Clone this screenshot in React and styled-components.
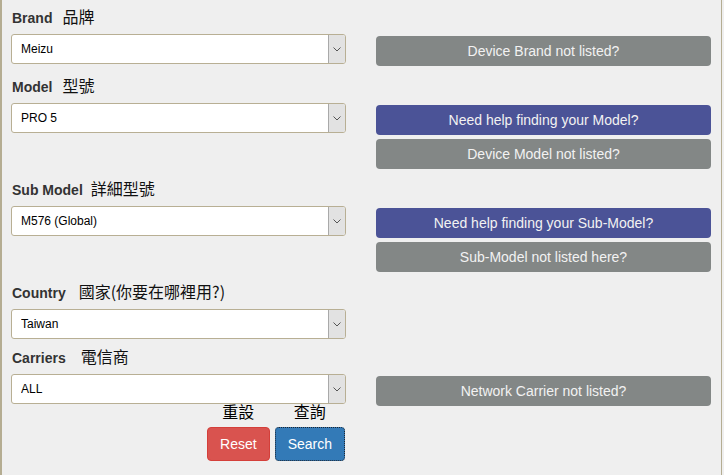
import React from 'react';
import styled, { createGlobalStyle } from 'styled-components';

const GlobalStyle = createGlobalStyle`
	html, body {
		margin: 0;
		padding: 0;
		background: #efefef;
	}
	body {
		font-family: "Liberation Sans", Arial, sans-serif;
	}
`

const Page = styled.div`
	box-sizing: border-box;
	width: 722px;
	height: 475px;
	padding: 8px 0 0 9px;
	background: #efefef;
	border-left: 2px solid #b5ad92;
	border-right: 1px solid #b5ad92;
	overflow: hidden;
`

const Row = styled.div`
	display: grid;
	grid-template-columns: 335px 335px;
	column-gap: 30px;
	align-items: start;
	margin-bottom: 9px;
`

const Field = styled.div`
	display: flex;
	flex-direction: column;
`

const Label = styled.div`
	display: flex;
	align-items: baseline;
	height: 20px;
	line-height: 20px;
	margin: 0 0 6px 1px;
	font-size: 14px;
	font-weight: bold;
	color: #333;
	white-space: nowrap;
`

const Zh = styled.span`
	margin-left: ${props => props.gap}px;
	font-family: "Noto Sans CJK TC", "Noto Sans", sans-serif;
	font-size: 16px;
	font-weight: normal;
	line-height: 1;
	color: #111;
`

const SelectBox = styled.div`
	display: flex;
	box-sizing: border-box;
	height: 30px;
	background: #fff;
	border: 1px solid #b8af94;
	border-radius: 3px;
	overflow: hidden;
`

const NativeSelect = styled.select`
	flex: 1;
	min-width: 0;
	appearance: none;
	-webkit-appearance: none;
	border: none;
	outline: none;
	background: transparent;
	padding: 0 0 0 9px;
	font-family: "Liberation Sans", Arial, sans-serif;
	font-size: 12px;
	color: #000;
`

const ArrowBox = styled.span`
	display: flex;
	align-items: center;
	justify-content: center;
	width: 16px;
	background: #e2e2e2;
	border-left: 1px solid #a9a9a9;
`

const ButtonStack = styled.div`
	display: flex;
	flex-direction: column;
	gap: 4px;
	padding-top: 28px;
	margin-bottom: 2px;
`

const HelpButton = styled.button`
	box-sizing: border-box;
	height: 30px;
	width: 100%;
	border: none;
	border-radius: 4px;
	background: ${props => props.variant === 'help' ? '#4b5397' : '#838786'};
	color: #f2f2f2;
	font-family: "Liberation Sans", Arial, sans-serif;
	font-size: 14px;
	cursor: pointer;
`

const Actions = styled.div`
	display: flex;
	justify-content: flex-end;
	gap: 5px;
	margin-top: -3px;
	padding-right: 1px;
`

const Action = styled.div`
	display: flex;
	flex-direction: column;
	align-items: center;
`

const Caption = styled.span`
	height: 20px;
	line-height: 20px;
	margin-bottom: 6px;
	font-family: "Noto Sans CJK TC", sans-serif;
	font-size: 16px;
	color: #000;
`

const FormButton = styled.button`
	box-sizing: border-box;
	height: 34px;
	padding: 6px 12px;
	border-radius: 4px;
	border: 1px ${props => props.focused ? 'dotted #1c2633' : 'solid'};
	border-color: ${props => props.focused ? '#1c2633' : props.danger ? '#d43f3a' : '#2e6da4'};
	background: ${props => props.danger ? '#d9534f' : '#337ab7'};
	color: #fff;
	font-family: "Liberation Sans", Arial, sans-serif;
	font-size: 14px;
	line-height: 20px;
	cursor: pointer;
`

const Chevron = () => (
	<svg width="8" height="5" viewBox="0 0 8 5">
		<path d="M0.5 0.5 L4 4 L7.5 0.5" fill="none" stroke="#555" strokeWidth="1" />
	</svg>
)

const Select = ({ value }) => (
	<SelectBox>
		<NativeSelect defaultValue={value}>
			<option>{value}</option>
		</NativeSelect>
		<ArrowBox><Chevron /></ArrowBox>
	</SelectBox>
)

const rows = [
	{ en: 'Brand', zh: '品牌', gap: 10, value: 'Meizu', buttons: [['plain', 'Device Brand not listed?']] },
	{ en: 'Model', zh: '型號', gap: 10, value: 'PRO 5', buttons: [['help', 'Need help finding your Model?'], ['plain', 'Device Model not listed?']] },
	{ en: 'Sub Model', zh: '詳細型號', gap: 8, value: 'M576 (Global)', buttons: [['help', 'Need help finding your Sub-Model?'], ['plain', 'Sub-Model not listed here?']] },
	{ en: 'Country', zh: '國家(你要在哪裡用?)', gap: 13, value: 'Taiwan', buttons: [] },
	{ en: 'Carriers', zh: '電信商', gap: 15, value: 'ALL', buttons: [['plain', 'Network Carrier not listed?']], last: true },
]

const App = () => (
	<Page>
		<GlobalStyle />
		{rows.map(row => (
			<Row key={row.en}>
				<Field>
					<Label>{row.en}<Zh gap={row.gap}>{row.zh}</Zh></Label>
					<Select value={row.value} />
					{row.last && (
						<Actions>
							<Action>
								<Caption>重設</Caption>
								<FormButton danger>Reset</FormButton>
							</Action>
							<Action>
								<Caption>查詢</Caption>
								<FormButton focused>Search</FormButton>
							</Action>
						</Actions>
					)}
				</Field>
				{row.buttons.length > 0 && (
					<ButtonStack>
						{row.buttons.map(([variant, text]) => (
							<HelpButton key={text} variant={variant}>{text}</HelpButton>
						))}
					</ButtonStack>
				)}
			</Row>
		))}
	</Page>
)

export default App;
